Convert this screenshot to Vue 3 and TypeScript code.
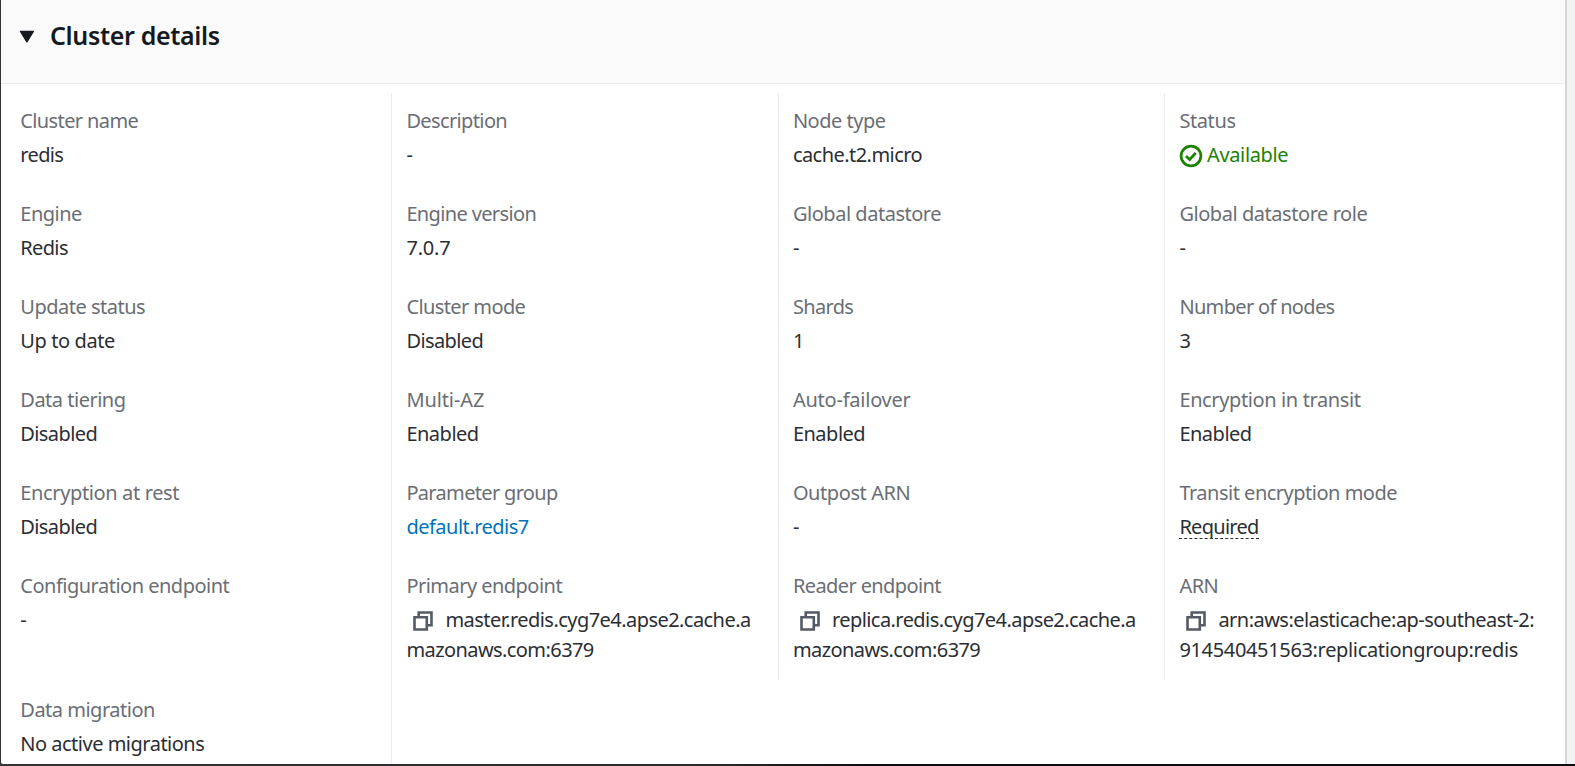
<script setup lang="ts">
interface Field {
  label: string
  lines: string[]
  kind?: 'status' | 'link' | 'hint' | 'copy'
  tall?: boolean
}

const columns: Field[][] = [
  [
    { label: 'Cluster name', lines: ['redis'] },
    { label: 'Engine', lines: ['Redis'] },
    { label: 'Update status', lines: ['Up to date'] },
    { label: 'Data tiering', lines: ['Disabled'] },
    { label: 'Encryption at rest', lines: ['Disabled'] },
    { label: 'Configuration endpoint', lines: ['-'], tall: true },
    { label: 'Data migration', lines: ['No active migrations'] },
  ],
  [
    { label: 'Description', lines: ['-'] },
    { label: 'Engine version', lines: ['7.0.7'] },
    { label: 'Cluster mode', lines: ['Disabled'] },
    { label: 'Multi-AZ', lines: ['Enabled'] },
    { label: 'Parameter group', lines: ['default.redis7'], kind: 'link' },
    { label: 'Primary endpoint', lines: ['master.redis.cyg7e4.apse2.cache.a', 'mazonaws.com:6379'], kind: 'copy' },
  ],
  [
    { label: 'Node type', lines: ['cache.t2.micro'] },
    { label: 'Global datastore', lines: ['-'] },
    { label: 'Shards', lines: ['1'] },
    { label: 'Auto-failover', lines: ['Enabled'] },
    { label: 'Outpost ARN', lines: ['-'] },
    { label: 'Reader endpoint', lines: ['replica.redis.cyg7e4.apse2.cache.a', 'mazonaws.com:6379'], kind: 'copy' },
  ],
  [
    { label: 'Status', lines: ['Available'], kind: 'status' },
    { label: 'Global datastore role', lines: ['-'] },
    { label: 'Number of nodes', lines: ['3'] },
    { label: 'Encryption in transit', lines: ['Enabled'] },
    { label: 'Transit encryption mode', lines: ['Required'], kind: 'hint' },
    { label: 'ARN', lines: ['arn:aws:elasticache:ap-southeast-2:', '914540451563:replicationgroup:redis'], kind: 'copy' },
  ],
]

// Letter spacing in px for texts that differ from the default tracking.
const tracking: Record<string, number> = {
  'Cluster name': -0.62,
  redis: -0.65,
  Redis: -0.65,
  'Up to date': -0.4,
  'Data tiering': -0.5,
  Disabled: -0.6,
  'Encryption at rest': -0.37,
  Description: -0.63,
  'Engine version': -0.64,
  '7.0.7': -0.2,
  'Cluster mode': -0.6,
  'Multi-AZ': -0.1,
  'Parameter group': -0.67,
  'Primary endpoint': -0.53,
  'master.redis.cyg7e4.apse2.cache.a': -0.55,
  'mazonaws.com:6379': -0.58,
  'Node type': -0.48,
  'cache.t2.micro': -0.55,
  'Global datastore': -0.47,
  Shards: -0.65,
  'Auto-failover': -0.23,
  'Outpost ARN': -0.42,
  'Reader endpoint': -0.6,
  'replica.redis.cyg7e4.apse2.cache.a': -0.56,
  Status: -0.4,
  Available: -0.36,
  'Global datastore role': -0.45,
  'Number of nodes': -0.67,
  'Encryption in transit': -0.38,
  Required: -0.72,
  'arn:aws:elasticache:ap-southeast-2:': -0.53,
  '914540451563:replicationgroup:redis': -0.34,
}

const spacing = (text: string) => ({ letterSpacing: `${tracking[text] ?? -0.5}px` })
</script>

<template>
  <main class="page">
    <section class="panel">
      <header class="head">
        <svg class="caret" width="15" height="13" viewBox="0 0 15 13"><path d="M1.500 1.400h12.800L7.900 11.800z" fill="#16191f" stroke="#16191f" stroke-width="1.400" stroke-linejoin="round" /></svg>
        <h2>Cluster details</h2>
      </header>
      <div class="columns">
        <div v-for="(col, c) in columns" :key="c" class="column">
          <div v-for="f in col" :key="f.label" class="field" :class="{ tall: f.tall }">
            <div class="label"><span :style="spacing(f.label)">{{ f.label }}</span></div>
            <div v-for="(line, i) in f.lines" :key="i" class="value" :class="f.kind">
              <svg v-if="f.kind === 'status'" class="check" width="24" height="24" viewBox="0 0 24 24" fill="none" stroke="#1d8102" stroke-width="2.700"><circle cx="12" cy="12" r="9.900" /><path d="M7 12l3.600 3.500 6.200-6.500" /></svg>
              <svg v-if="f.kind === 'copy' && i === 0" class="copy-icon" width="20" height="20" viewBox="0 0 20 20" fill="none" stroke="#545b64" stroke-width="2.600"><path d="M5.700 6V1.500h12.800v12.800H14" /><path d="M1.500 6.200h12.300v12.300H1.500z" /></svg>
              <span class="text" :style="spacing(line)">{{ line }}</span>
            </div>
          </div>
        </div>
      </div>
    </section>
  </main>
</template>

<style>
body { background: #222224; overflow: hidden; }
</style>

<style scoped>
.page {
  box-sizing: border-box;
  width: 1575px;
  height: 766px;
  padding: 0 0 2px 1px;
  background: linear-gradient(90deg, #353537, #2a2a2c 45%, #0e0e10 55%);
  font-family: "Noto Sans", "Open Sans", sans-serif;
  font-size: 20px;
  color: #2b2e33;
}
.panel {
  box-sizing: border-box;
  height: 764px;
  background: #fff;
  border-right: 8px solid #f2f2f3;
  border-bottom-left-radius: 2px;
  box-shadow: inset -2px 0 0 #d5d6d7;
  overflow: hidden;
}
.head {
  box-sizing: border-box;
  display: flex;
  align-items: center;
  height: 84px;
  margin-right: 2px;
  padding: 0 0 13px 18px;
  background: #fafafa;
  border-bottom: 1px solid #eaeded;
}
.caret { margin: 3px 16px 0 0; }
h2 { margin: 0; font-size: 25px; line-height: 36px; font-weight: 600; letter-spacing: -0.35px; color: #16191f; }
.columns {
  display: grid;
  grid-template-columns: 390px 386.500px 386.500px 1fr;
  align-items: start;
  padding-top: 9px;
}
.column {
  box-sizing: border-box;
  height: 587px;
  padding: 13.400px 0 0 14.400px;
  border-left: 1px solid #eaeded;
}
.column:first-child { padding-left: 19.300px; border-left: 0; }
.column:nth-child(2) { height: 671px; }
.field { margin-bottom: 29px; }
.tall { margin-bottom: 59.800px; }
.label { height: 34px; line-height: 30px; color: #6a6e74; white-space: nowrap; }
.value { display: flex; height: 30px; line-height: 30px; white-space: nowrap; }
.check { margin: 4px 4px 0 -0.400px; flex: none; }
.copy-icon { margin: 6px 12px 0 7px; flex: none; }
.status { color: #1d8102; }
.link { color: #0073bb; }
.hint .text { height: 26px; border-bottom: 1px dashed #2b2e33; }
</style>
